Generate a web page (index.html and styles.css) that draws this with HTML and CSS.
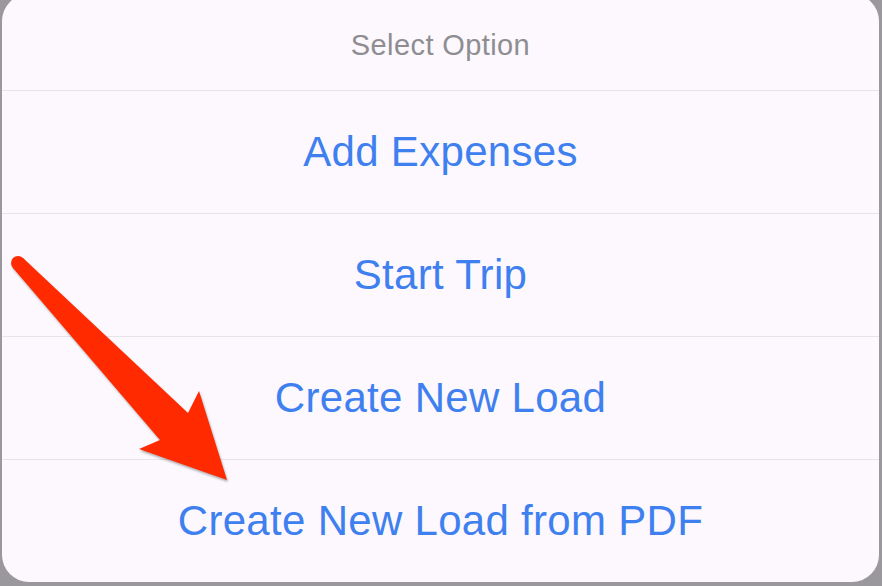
FILE: index.html
```html
<!DOCTYPE html>
<html lang="en">
  <head>
    <meta charset="UTF-8" />
    <meta name="viewport" content="width=device-width, initial-scale=1.0" />
    <title>Select Option</title>
    <link rel="stylesheet" href="styles.css">
  </head>
  <body>
    <div class="sheet">
      <div class="sheet-title">Select Option</div>
      <div class="option">Add Expenses</div>
      <div class="option">Start Trip</div>
      <div class="option">Create New Load</div>
      <div class="option">Create New Load from PDF</div>
    </div>

    <svg class="arrow" width="882" height="586" viewBox="0 0 882 586">
      <polygon points="23,258 188,413 199,391 227,480 139,449 160,440 13,268" />
      <circle cx="18" cy="263" r="7" />
    </svg>
  </body>
</html>
```

FILE: styles.css
```css
body {
  margin: 0;
  width: 882px;
  height: 586px;
  overflow: hidden;
  background: #9a989c;
  font-family: "Liberation Sans", Arial, sans-serif;
  position: relative;
}

.sheet {
  width: 877px;
  height: 588px;
  margin: -6px 0 0 2px;
  background: #fcf8fd;
  border-radius: 27px;
  display: flex;
  flex-direction: column;
  overflow: hidden;
}

.sheet-title {
  height: 90px;
  padding-top: 6px;
  display: flex;
  align-items: center;
  justify-content: center;
  font-size: 29px;
  letter-spacing: 0.4px;
  color: #8e8d92;
}

.option {
  height: 122px;
  border-top: 1px solid #e7e3e9;
  display: flex;
  align-items: center;
  justify-content: center;
  font-size: 42px;
  letter-spacing: 0.3px;
  color: #3f80f0;
}

.arrow {
  position: absolute;
  top: 0;
  left: 0;
  fill: #ff2a00;
  filter: drop-shadow(1px 2px 1px rgba(0, 0, 0, 0.3));
}
```
